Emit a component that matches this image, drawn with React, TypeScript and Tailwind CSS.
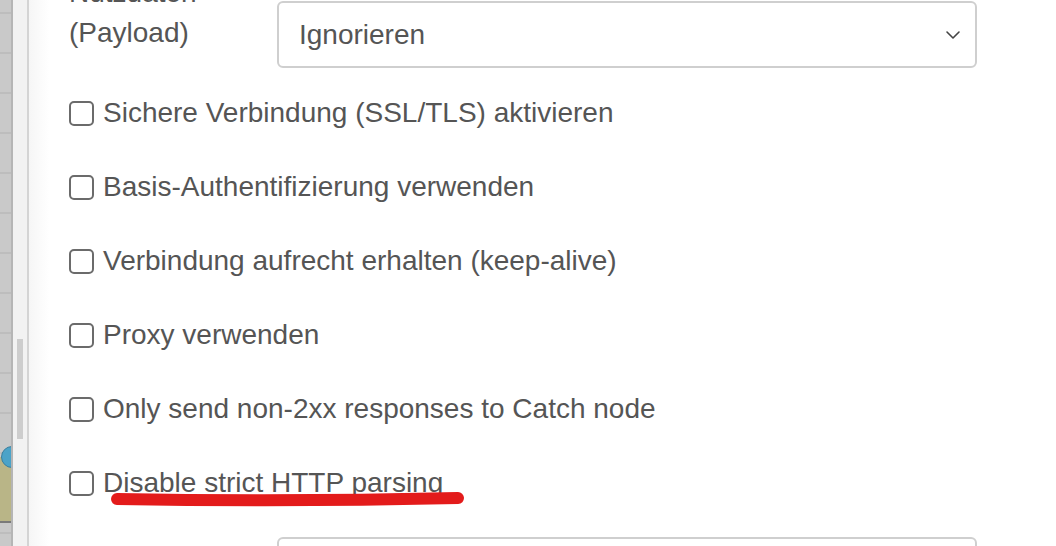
import { ChevronDown } from 'lucide-react';

const options = [
  'Sichere Verbindung (SSL/TLS) aktivieren',
  'Basis-Authentifizierung verwenden',
  'Verbindung aufrecht erhalten (keep-alive)',
  'Proxy verwenden',
  'Only send non-2xx responses to Catch node',
  'Disable strict HTTP parsing',
];

function Canvas() {
  return (
    <div className="relative w-[11px] shrink-0 overflow-hidden bg-[#c9c9c9]">
      {/* grid lines */}
      <div className="flex flex-col pt-[12px]">
        {Array.from({ length: 14 }).map((_, i) => (
          <div key={i} className="h-[2px] mb-[38px] bg-[#bdbdbd]" />
        ))}
      </div>
      {/* node peeking in from the left */}
      <div className="absolute left-0 top-[457px] h-[66px] w-full bg-[#b9b587] border-b-2 border-[#7a7a7a]" />
      <div className="absolute left-[1px] top-[446px] h-[22px] w-[22px] rounded-full bg-[#4ba3c8] border border-[#3a7f9e]" />
    </div>
  );
}

export default function App() {
  return (
    <div
      className="flex h-[546px] w-[1056px] overflow-hidden bg-white text-[#555]"
      style={{ fontFamily: '"Liberation Sans", Arial, sans-serif' }}
    >
      <Canvas />
      <div className="w-[2px] shrink-0 bg-[#b5b5b5]" />

      {/* scrollbar */}
      <div className="relative w-[14px] shrink-0 bg-[#f2f2f2]">
        <div className="absolute left-[4px] top-[339px] h-[100px] w-[6px] bg-[#cdcdcd]" />
      </div>
      <div className="w-[2px] shrink-0 bg-[#d4d4d4]" />

      {/* form panel */}
      <div className="flex-1 bg-gradient-to-r from-[#f6f6f6] via-white via-[2%] to-white pl-[40px]">
        <div className="flex h-[69px] items-start">
          <div className="-mt-[27px] w-[208px] shrink-0 text-[28px] leading-[40px]">
            <div>Nutzdaten</div>
            <div>(Payload)</div>
          </div>
          <div className="mt-[1px] flex h-[67px] w-[700px] items-center justify-between rounded-[6px] border-2 border-[#cfcfcf] pl-[20px] pr-[10px] text-[28px]">
            <span>Ignorieren</span>
            <ChevronDown className="h-[24px] w-[24px] text-[#444]" strokeWidth={1.6} />
          </div>
        </div>

        <div className="mt-[7px] flex flex-col">
          {options.map((label, i) => (
            <div key={label} className="relative flex h-[74px] items-center gap-[9px]">
              <div className="h-[25px] w-[25px] shrink-0 rounded-[5px] border-2 border-[#6b6b6b] bg-white" />
              <span className="text-[28px] leading-none">{label}</span>
              {i === options.length - 1 && (
                <svg className="absolute left-[42px] top-[45px]" width="360" height="20" viewBox="0 0 360 20">
                  <path d="M6 8 Q180 11 347 7" stroke="#e31b1b" strokeWidth="12" strokeLinecap="round" fill="none" />
                </svg>
              )}
            </div>
          ))}
        </div>

        <div className="ml-[208px] mt-[17px] h-[60px] w-[700px] rounded-[6px] border-2 border-[#cfcfcf]" />
      </div>
    </div>
  );
}
